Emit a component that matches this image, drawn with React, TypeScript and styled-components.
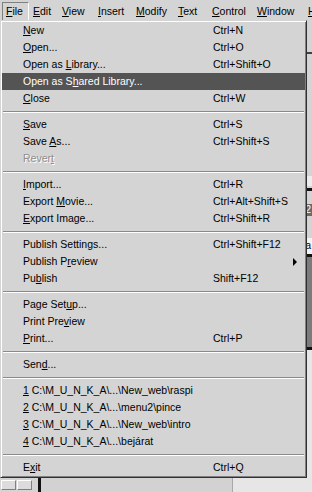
import React from 'react';
import styled, { createGlobalStyle } from 'styled-components';

const GlobalStyle = createGlobalStyle`
  html, body {
    margin: 0;
    padding: 0;
    background: #d4d4d4;
  }
  body {
    font-family: "Liberation Sans", Arial, sans-serif;
    font-size: 10.5px;
    color: #000;
  }
`

type MenuEntry =
  | { kind: 'item', label: string, shortcut?: string, disabled?: boolean, submenu?: boolean, active?: boolean }
  | { kind: 'sep' }

const topMenus = [
  { label: '&File', width: 27, open: true },
  { label: '&Edit', width: 29 },
  { label: '&View', width: 36 },
  { label: '&Insert', width: 38 },
  { label: '&Modify', width: 42 },
  { label: '&Text', width: 34 },
  { label: '&Control', width: 45 },
  { label: '&Window', width: 51 },
  { label: '&Help', width: 40 },
]

const sep: MenuEntry = { kind: 'sep' }
const item = (label: string, shortcut?: string, extra: object = {}): MenuEntry => ({ kind: 'item', label, shortcut, ...extra })

const fileMenu: MenuEntry[] = [
  item('&New', 'Ctrl+N'),
  item('&Open...', 'Ctrl+O'),
  item('Open as &Library...', 'Ctrl+Shift+O'),
  item('Open as S&hared Library...', undefined, { active: true }),
  item('&Close', 'Ctrl+W'),
  sep,
  item('&Save', 'Ctrl+S'),
  item('Save &As...', 'Ctrl+Shift+S'),
  item('Rever&t', undefined, { disabled: true }),
  sep,
  item('&Import...', 'Ctrl+R'),
  item('Export &Movie...', 'Ctrl+Alt+Shift+S'),
  item('&Export Image...', 'Ctrl+Shift+R'),
  sep,
  item('Publish Settin&gs...', 'Ctrl+Shift+F12'),
  item('Publish P&review', undefined, { submenu: true }),
  item('Pu&blish', 'Shift+F12'),
  sep,
  item('Page Set&up...'),
  item('Print Pre&view'),
  item('&Print...', 'Ctrl+P'),
  sep,
  item('Sen&d...'),
  sep,
  item('&1 C:\\M_U_N_K_A\\...\\New_web\\raspi'),
  item('&2 C:\\M_U_N_K_A\\...\\menu2\\pince'),
  item('&3 C:\\M_U_N_K_A\\...\\New_web\\intro'),
  item('&4 C:\\M_U_N_K_A\\...\\bejárat'),
  sep,
  item('E&xit', 'Ctrl+Q'),
]

// splits "Open as S&hared" into text with the mnemonic letter underlined
const Mnemonic = ({ text }: { text: string }) => {
  const i = text.indexOf('&')
  if (i < 0) return <>{text}</>
  return (
    <>
      {text.slice(0, i)}
      <u>{text.charAt(i + 1)}</u>
      {text.slice(i + 2)}
    </>
  )
}

const Window = styled.div`
  position: relative;
  width: 312px;
  height: 492px;
  overflow: hidden;
  display: flex;
  flex-direction: column;
  background: #d4d4d4;
`

const MenuBar = styled.div`
  height: 20px;
  display: flex;
  padding-left: 2px;
  white-space: nowrap;
  flex-shrink: 0;
`

const BarItem = styled.div<{ $width: number, $open?: boolean }>`
  flex: 0 0 ${p => p.$width}px;
  height: 18px;
  margin-top: 2px;
  box-sizing: border-box;
  padding-left: 3px;
  line-height: 17px;
  border: 1px solid transparent;
  border-color: ${p => p.$open ? '#808080 #ffffff #ffffff #808080' : 'transparent'};
  border-bottom: none;

  u {
    text-decoration-thickness: 1px;
    text-underline-offset: 1px;
  }
`

const Workspace = styled.div`
  flex: 1;
  display: flex;
`

const Toolbox = styled.div`
  width: 38px;
  display: flex;
  flex-direction: column;
  justify-content: flex-end;
  padding-bottom: 2px;
  box-sizing: border-box;
`

const ToolRow = styled.div`
  display: flex;
  gap: 1px;
  padding-left: 1px;
`

const ToolButton = styled.div`
  width: 15px;
  height: 10px;
  box-sizing: border-box;
  border: 1px solid;
  border-color: #ffffff #808080 #808080 #ffffff;
  background: #dcdcdc;
`

const Divider = styled.div`
  width: 3px;
  background: #111;
`

const Stage = styled.div`
  flex: 1;
  background: #d2d2d2;
  border-right: 1px solid #a8a8a8;
`

const Panel = styled.div`
  width: 79px;
  display: flex;
  flex-direction: column;
  background: #e6e6e6;
`

const PanelBlock = styled.div<{ $h: number, $bg: string, $color?: string }>`
  height: ${p => p.$h}px;
  background: ${p => p.$bg};
  color: ${p => p.$color || '#000'};
  flex-shrink: 0;
  font-size: 10px;
  line-height: ${p => p.$h}px;
  text-align: right;
  padding-right: 1px;
  overflow: hidden;
`

const Dropdown = styled.div`
  position: absolute;
  top: 20px;
  left: 0;
  width: 307px;
  box-sizing: border-box;
  padding: 1px;
  background: #d4d4d4;
  border: 1px solid;
  border-color: #d4d4d4 #303030 #303030 #d4d4d4;
  box-shadow: inset 1px 1px 0 #ffffff, inset -1px -1px 0 #808080;
`

const Row = styled.div<{ $active?: boolean, $disabled?: boolean }>`
  display: grid;
  grid-template-columns: 190px 1fr 20px;
  align-items: center;
  height: 17px;
  line-height: 17px;
  padding-left: 21px;
  white-space: nowrap;
  background: ${p => p.$active ? '#545454' : 'transparent'};
  color: ${p => p.$active ? '#ffffff' : p.$disabled ? '#8e8e8e' : '#000000'};
  text-shadow: ${p => p.$disabled ? '1px 1px 0 #ffffff' : 'none'};

  u {
    text-decoration-thickness: 1px;
    text-underline-offset: 1px;
  }
`

const Shortcut = styled.span``

const Arrow = styled.span`
  justify-self: center;
  width: 0;
  height: 0;
  border-left: 4px solid #000;
  border-top: 4px solid transparent;
  border-bottom: 4px solid transparent;
`

const Separator = styled.div`
  height: 9px;
  display: flex;
  flex-direction: column;
  justify-content: center;
  padding: 0 1px;

  &::before {
    content: '';
    height: 1px;
    background: #8a8a8a;
    border-bottom: 1px solid #ffffff;
  }
`

const App = () => (
  <Window>
    <GlobalStyle />
    <MenuBar>
      {topMenus.map(m => (
        <BarItem key={m.label} $width={m.width} $open={m.open}>
          <Mnemonic text={m.label} />
        </BarItem>
      ))}
    </MenuBar>
    <Workspace>
      <Toolbox>
        <ToolRow>
          <ToolButton />
          <ToolButton />
        </ToolRow>
      </Toolbox>
      <Divider />
      <Stage />
      <Panel>
        <PanelBlock $h={32} $bg="#d4d4d4" />
        <PanelBlock $h={2} $bg="#404040" />
        <PanelBlock $h={122} $bg="#d4d4d4" />
        <PanelBlock $h={10} $bg="#ececec" />
        <PanelBlock $h={2} $bg="#d4d4d4" />
        <PanelBlock $h={3} $bg="#111111" />
        <PanelBlock $h={13} $bg="#d4d4d4" />
        <PanelBlock $h={12} $bg="#6a6a6a" $color="#ffffff">2</PanelBlock>
        <PanelBlock $h={22} $bg="#d4d4d4" />
        <PanelBlock $h={16} $bg="#f4f4f4">ra</PanelBlock>
        <PanelBlock $h={3} $bg="#111111" />
        <PanelBlock $h={90} $bg="#7b7b7b" />
        <PanelBlock $h={3} $bg="#111111" />
      </Panel>
    </Workspace>
    <Dropdown>
      {fileMenu.map((e, k) => e.kind === 'sep' ? (
        <Separator key={k} />
      ) : (
        <Row key={k} $active={e.active} $disabled={e.disabled}>
          <span><Mnemonic text={e.label} /></span>
          <Shortcut>{e.shortcut}</Shortcut>
          {e.submenu ? <Arrow /> : <span />}
        </Row>
      ))}
    </Dropdown>
  </Window>
);

export default App;
